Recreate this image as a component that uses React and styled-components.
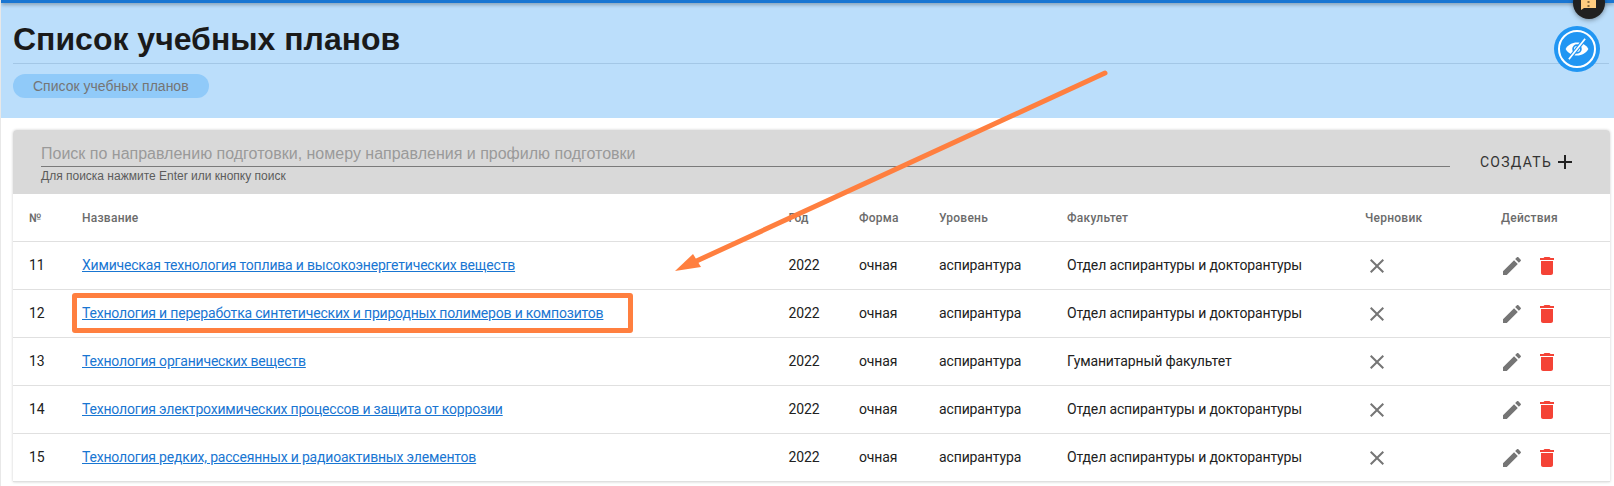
import React from "react";
import styled, { createGlobalStyle } from "styled-components";

const Global = createGlobalStyle`
  html, body { margin: 0; padding: 0; background: #fff; }
  body { font-family: Roboto, "Liberation Sans", sans-serif; overflow: hidden; }
`;

const Page = styled.div`
  position: relative;
  width: 1614px;
  height: 486px;
  overflow: hidden;
  background: #fff;
  border-left: 1px solid #e8e8e8;
  box-sizing: border-box;
`;
const TopBar = styled.div`
  height: 3px;
  background: #1976d2;
  box-shadow: 0 1px 4px rgba(0, 0, 0, 0.45);
  position: relative;
`;
const Header = styled.header`
  height: 115px;
  background: #bbdefb;
  padding: 0 5px 0 12px;
  box-sizing: border-box;
`;
const Title = styled.h1`
  margin: 0;
  height: 61px;
  box-sizing: border-box;
  padding-top: 16px;
  font: 700 32px/40px "Liberation Sans", Arial, sans-serif;
  color: #1a1a1a;
  border-bottom: 1px solid #a3c7e6;
`;
const Pill = styled.div`
  margin-top: 10px;
  width: 196px;
  height: 24px;
  border-radius: 12px;
  background: #90caf9;
  color: #757575;
  font: 400 14px/24px "Liberation Sans", Arial, sans-serif;
  padding-left: 20px;
  box-sizing: border-box;
`;
const Card = styled.section`
  margin: 12px 4px 0 12px;
  border-radius: 4px 4px 0 0;
  box-shadow: 0 0 3px rgba(0, 0, 0, 0.2);
  background: #fff;
`;
const Toolbar = styled.div`
  height: 64px;
  background: #d9d9d9;
  border-radius: 4px 4px 0 0;
  display: flex;
  padding: 0 0 0 28px;
`;
const Search = styled.div`
  width: 1409px;
  padding-top: 13px;
`;
const Placeholder = styled.div`
  font: 400 16px/22px "Liberation Sans", Arial, sans-serif;
  color: #9a9a9a;
  height: 23px;
  border-bottom: 1px solid #7a7a7a;
`;
const Helper = styled.div`
  font: 400 12px/18px "Liberation Sans", Arial, sans-serif;
  color: #5c5c5c;
`;
const CreateButton = styled.button`
  border: 0;
  background: none;
  margin: 0 0 0 30px;
  padding: 0;
  height: 64px;
  display: flex;
  align-items: center;
  color: #333;
  font: 400 14px Roboto, sans-serif;
  letter-spacing: 1.25px;
  text-transform: uppercase;
  svg { margin-left: 1px; }
`;
const Row = styled.div`
  display: grid;
  grid-template-columns: 53px 706.5px 70.5px 80px 128px 298px 136px 1fr;
  align-items: center;
  padding-left: 16px;
  height: 48px;
  box-sizing: border-box;
  border-bottom: 1px solid #e0e0e0;
  font-size: ${(p) => (p.$head ? "12px" : "14px")};
  font-weight: ${(p) => (p.$head ? 500 : 400)};
  letter-spacing: ${(p) => (p.$head ? "0.25px" : "-0.13px")};
  line-height: ${(p) => (p.$head ? "20px" : "18px")};
  color: ${(p) => (p.$head ? "#6b6b6b" : "#212121")};
`;
const Text = styled.div`
  margin-top: -2px;
`;
const PlanLink = styled.a`
  color: #1976d2;
  text-decoration: underline;
  letter-spacing: -0.19px;
`;
const Actions = styled.div`
  display: flex;
  gap: 11px;
  margin-left: -1px;
`;
const Icon = styled.svg`
  width: ${(p) => p.$size || 24}px;
  height: ${(p) => p.$size || 24}px;
  display: block;
  fill: ${(p) => p.$color || "#757575"};
`;
const Highlight = styled.div`
  position: absolute;
  left: 71px;
  top: 293px;
  width: 561px;
  height: 40px;
  box-sizing: border-box;
  border: 5px solid #ff7f3f;
  border-radius: 3px;
`;
const ArrowLayer = styled.svg`
  position: absolute;
  left: -1px;
  top: 0;
  pointer-events: none;
`;
const Fab = styled.div`
  position: absolute;
  left: 1553px;
  top: 26px;
  width: 46px;
  height: 46px;
  border-radius: 50%;
  background: #2196f3;
  display: flex;
  align-items: center;
  justify-content: center;
  &::before {
    content: "";
    position: absolute;
    inset: 4px;
    border: 2px solid #fff;
    border-radius: 50%;
  }
`;
const ChatFab = styled.div`
  position: absolute;
  left: 1572px;
  top: -13px;
  width: 32px;
  height: 32px;
  border-radius: 50%;
  background: #212121;
  box-shadow: 0 1px 5px rgba(0, 0, 0, 0.4);
  display: flex;
  align-items: flex-end;
  justify-content: center;
  padding-bottom: 9px;
  box-sizing: border-box;
`;

const CloseI = () => (
  <Icon viewBox="0 0 24 24"><path d="M19 6.41L17.59 5 12 10.59 6.41 5 5 6.41 10.59 12 5 17.59 6.41 19 12 13.41 17.59 19 19 17.59 13.41 12z" /></Icon>
);
const EditI = () => (
  <Icon viewBox="0 0 24 24"><path d="M3 17.25V21h3.75L17.81 9.94l-3.75-3.75L3 17.25zM20.71 7.04c.39-.39.39-1.02 0-1.41l-2.34-2.34c-.39-.39-1.02-.39-1.41 0l-1.83 1.83 3.75 3.75 1.83-1.83z" /></Icon>
);
const DeleteI = () => (
  <Icon viewBox="0 0 24 24" $color="#f44336"><path d="M6 19c0 1.1.9 2 2 2h8c1.1 0 2-.9 2-2V7H6v12zM19 4h-3.5l-1-1h-5l-1 1H5v2h14V4z" /></Icon>
);

const rows = [
  ["11", "Химическая технология топлива и высокоэнергетических веществ", "Отдел аспирантуры и докторантуры"],
  ["12", "Технология и переработка синтетических и природных полимеров и композитов", "Отдел аспирантуры и докторантуры"],
  ["13", "Технология органических веществ", "Гуманитарный факультет"],
  ["14", "Технология электрохимических процессов и защита от коррозии", "Отдел аспирантуры и докторантуры"],
  ["15", "Технология редких, рассеянных и радиоактивных элементов", "Отдел аспирантуры и докторантуры"],
];

export default function App() {
  return (
    <Page>
      <Global />
      <TopBar />
      <Header>
        <Title>Список учебных планов</Title>
        <Pill>Список учебных планов</Pill>
      </Header>
      <Card>
        <Toolbar>
          <Search>
            <Placeholder>Поиск по направлению подготовки, номеру направления и профилю подготовки</Placeholder>
            <Helper>Для поиска нажмите Enter или кнопку поиск</Helper>
          </Search>
          <CreateButton>
            Создать
            <Icon viewBox="0 0 24 24" $color="#222"><path d="M19 13h-6v6h-2v-6H5v-2h6V5h2v6h6v2z" /></Icon>
          </CreateButton>
        </Toolbar>
        <Row $head>
          <div>№</div>
          <div>Название</div>
          <div>Год</div>
          <div>Форма</div>
          <div>Уровень</div>
          <div>Факультет</div>
          <div>Черновик</div>
          <div>Действия</div>
        </Row>
        {rows.map(([n, name, fac]) => (
          <Row key={n}>
            <Text>{n}</Text>
            <Text><PlanLink href="#">{name}</PlanLink></Text>
            <Text>2022</Text>
            <Text>очная</Text>
            <Text>аспирантура</Text>
            <Text>{fac}</Text>
            <div><CloseI /></div>
            <Actions><EditI /><DeleteI /></Actions>
          </Row>
        ))}
      </Card>
      <Highlight />
      <ArrowLayer width="1614" height="486" viewBox="0 0 1614 486">
        <line x1="1105" y1="73" x2="690" y2="264" stroke="#ff7f3f" strokeWidth="5" strokeLinecap="round" />
        <polygon points="675,271 693,254 701,267" fill="#ff7f3f" />
      </ArrowLayer>
      <ChatFab>
        <svg width="16" height="12" viewBox="0 0 16 12">
          <path d="M0 0H15V10H3L0 12Z" fill="#ffcc80" />
          <rect x="6.500" y="3" width="2" height="2" fill="#8a6a3a" />
          <rect x="6.500" y="7" width="2" height="2" fill="#8a6a3a" />
        </svg>
      </ChatFab>
      <Fab>
        <Icon viewBox="0 0 24 24" $color="#fff" $size={26}>
          <path d="M12 6C7.500 6 3.500 8.400 1.500 12c2 3.600 6 6 10.500 6s8.500-2.400 10.500-6C20.500 8.400 16.500 6 12 6z" />
          <circle cx="12" cy="12" r="3.600" fill="none" stroke="#2196f3" strokeWidth="1.600" />
          <line x1="4.500" y1="21.500" x2="19.500" y2="2.500" stroke="#2196f3" strokeWidth="3.600" />
          <line x1="4.500" y1="21.500" x2="19.500" y2="2.500" stroke="#fff" strokeWidth="1.600" />
        </Icon>
      </Fab>
    </Page>
  );
}
